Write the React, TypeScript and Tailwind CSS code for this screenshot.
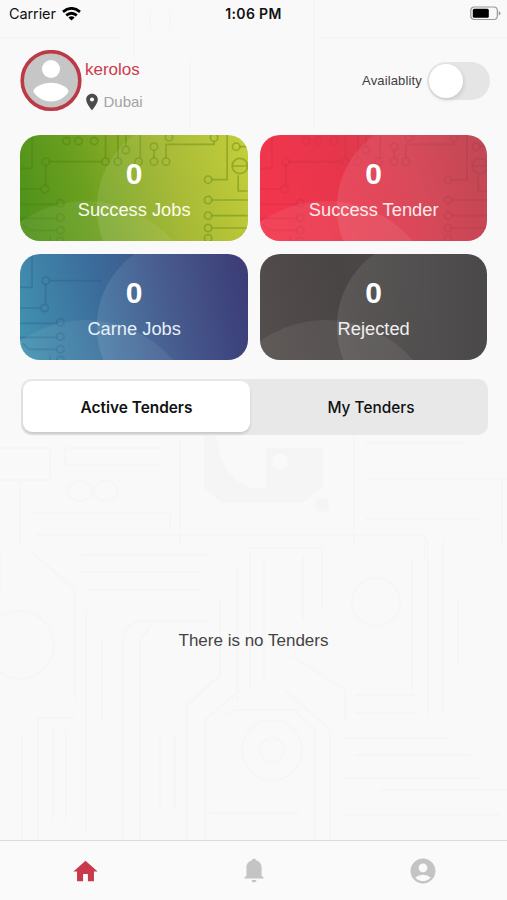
import { useState } from "react"
import { MdAccountCircle, MdHome, MdLocationOn } from "react-icons/md"

const stats = [
    { label: "Success Jobs", value: 0, bg: "bg-[linear-gradient(75deg,#51931b_5%,#6b9f1f_30%,#a3b72f_65%,#c5cf3c_100%)]", line: "text-[#4c8010]/40", midLine: "text-[#4c8010]/40", rightLine: "text-[#5f8510]/45", text: "text-[#fafcee]" },
    { label: "Success Tender", value: 0, bg: "bg-[linear-gradient(75deg,#f5354e_0%,#e6364b_40%,#d54354_68%,#c04955_100%)]", line: "text-[#a92d42]/20", midLine: "text-[#a92d42]/15", rightLine: "text-[#9c3044]/22", text: "text-[#ffe9ea]" },
    { label: "Carne Jobs", value: 0, bg: "bg-[linear-gradient(75deg,#4294b2_0%,#3b6c9b_38%,#3f5389_65%,#3c3b76_100%)]", line: "text-[#265d82]/35", midLine: "text-transparent", rightLine: "text-transparent", text: "text-[#e6f0fa]" },
    { label: "Rejected", value: 0, bg: "bg-[linear-gradient(75deg,#544e4d_0%,#494544_40%,#4b4949_70%,#4b4949_100%)]", line: "text-transparent", midLine: "text-transparent", rightLine: "text-transparent", text: "text-[#eeeeee]" },
]

const leftDots = [[109, 102], [106, 184], [153, 227], [153, 270], [153, 308], [153, 340]]
const midDots = [[171, 40], [207, 40], [254, 40], [288, 102], [325, 102]]
const rightDots = [[349, 67], [387, 102], [433, 57], [433, 102], [469, 102], [478, 29], [613, 30], [679, 57], [595, 156], [595, 217], [595, 264], [595, 301], [595, 332]]

function CardArt({ line, midLine, rightLine }: any) {
    return (
        <svg className="absolute inset-0 h-full w-full" viewBox="32 22 681 318" preserveAspectRatio="none" fill="none" stroke="currentColor" strokeWidth="5">
            <defs>
                <linearGradient id="shine" gradientUnits="userSpaceOnUse" x1="262" y1="0" x2="680" y2="0">
                    <stop offset="0" stopColor="#fff" stopOpacity="0.1" />
                    <stop offset="0.45" stopColor="#fff" stopOpacity="0.05" />
                    <stop offset="1" stopColor="#fff" stopOpacity="0" />
                </linearGradient>
            </defs>
            <g className={line}>
                {leftDots.map(([x, y]) => <circle key={x + "-" + y} cx={x} cy={y} r="11" />)}
                <path d="M120 102H277M109 113V173M32 184H95M68 22V122H32M32 230H142M32 272H142M60 308H142M60 308L40 290M122 340V325" />
            </g>
            <g className={midLine}>
                {midDots.map(([x, y]) => <circle key={x + "-" + y} cx={x} cy={y} r="11" />)}
                <path d="M288 22V91M325 22V91" />
            </g>
            <g className={rightLine}>
                {rightDots.map(([x, y]) => <circle key={x + "-" + y} cx={x} cy={y} r="11" />)}
                <circle cx="690" cy="115" r="23" />
                <path d="M349 22V56M392 22V91M433 68V91M469 91V50H613V41M606 156H652V22M606 217H713M606 264H713M606 301H713M685 143V190H713M669 115H711M690 57H713" />
            </g>
            <circle cx="529" cy="240" r="267" fill="url(#shine)" stroke="none" />
            <circle cx="230" cy="562" r="342" fill="white" fillOpacity="0.07" stroke="none" />
        </svg>
    )
}

function StatCard({ item }: any) {
    return (
        <div className={`relative h-[106px] overflow-hidden rounded-[20px] ${item.bg}`}>
            <CardArt line={item.line} midLine={item.midLine} rightLine={item.rightLine} />
            <div className="relative flex flex-col items-center pt-[21px]">
                <span className="text-[30px] font-bold leading-[36px] text-white">{item.value}</span>
                <span className={`mt-[6px] text-[18.3px] leading-[24px] ${item.text}`}>{item.label}</span>
            </div>
        </div>
    )
}

// faint circuit board behind the whole screen
function Backdrop() {
    return (
        <svg className="absolute inset-0 h-full w-full" viewBox="0 0 507 900" fill="none" stroke="#f6f6f6" strokeWidth="2">
            <path d="M134 0V60M0 38H120M314 0V128M322 38H507M190 60V128M150 10V30M170 10V30" />
            <path d="M0 448H50V480H0M65 448V465H160M65 448H160M20 480V545M32 513H170V530M180 440V545M354 434V545M365 443H465M370 479H507M365 519H480M36 535H425V560M502 480V545" />
            <path d="M82 555H210M82 572H200M90 590H200M30 550L75 590V700M0 555V590M250 690V548H322V610M237 570V700M264 560V680M303 556V620M428 540V715M443 540V715M412 560V690M458 600V665" />
            <path d="M123 840V640Q123 625 140 621H210M140 840V640L155 620M22 735V840M38 840V718H75M86 610V835M102 640V720M53 730V820M66 730V820M160 735V810M175 735V810M187 840V705L220 675V600M205 840V720L240 690" />
            <path d="M290 655L345 690V720M285 690L330 730V840M222 715L235 710H295L315 730V840M355 695H415M355 713H415M345 738H450M355 755H470M345 778H480M380 790H507M345 815H500M210 813H300" />
            <circle cx="20" cy="645" r="34" />
            <circle cx="376" cy="602" r="24" />
            <circle cx="272" cy="750" r="30" />
            <circle cx="272" cy="750" r="12" />
            <ellipse cx="80" cy="491" rx="12" ry="10" />
            <ellipse cx="106" cy="491" rx="12" ry="10" />
            <circle cx="322" cy="505" r="7" fill="#f5f5f5" />
            <path d="M204 430V488L222 503H303L323 487V448H266V488H250Q218 475 216 430Z" fill="#f5f5f5" stroke="none" />
            <circle cx="280" cy="462" r="8" fill="#f9f9f9" stroke="none" />
        </svg>
    )
}

function Bell() {
    return (
        <svg className="h-[25px] w-[20px] text-[#c4c4c4]" viewBox="0 0 20 25" fill="currentColor">
            <path d="M10 0.500C8.900 0.500 8.300 1.200 8.100 2.300C4.500 3.200 2.400 6 2.400 9.500V18L0.500 19.200V20.600H19.500V19.200L17.600 18V9.500C17.600 6 15.500 3.200 11.900 2.300C11.700 1.200 11.100 0.500 10 0.500Z" />
            <path d="M7.500 22H12.500C12.300 23.600 11.300 24.500 10 24.500C8.700 24.500 7.700 23.600 7.500 22Z" />
        </svg>
    )
}

export default function App() {
    const [tab, setTab] = useState("active")
    const [available, setAvailable] = useState(false)

    return (
        <div className="relative h-[900px] w-[507px] overflow-hidden bg-[#f9f9f9] font-['Liberation_Sans',Arial,sans-serif]">
            <Backdrop />
            <div className="relative flex h-full flex-col">
                <header className="grid h-[28px] grid-cols-3 items-center pl-[9px] pr-[6px] font-['Inter',sans-serif] text-[#111]">
                    <div className="flex items-center gap-[6px]">
                        <span className="text-[14.5px] tracking-[-0.1px]">Carrier</span>
                        <svg className="-mt-[1px] h-[14px] w-[19px]" viewBox="0 0 19 14" fill="none" stroke="#000" strokeWidth="2.8">
                            <path d="M1 4.800Q9.500 -2 18 4.800" />
                            <path d="M4.200 8.400Q9.500 4 14.800 8.400" />
                            <path d="M6.400 10.500Q9.500 8.200 12.600 10.500L9.500 13.600Z" fill="#000" stroke="none" />
                        </svg>
                    </div>
                    <span className="-ml-[3px] -mt-[1px] text-center text-[14px] font-semibold tracking-[0.35px]">1:06 PM</span>
                    <svg className="-mt-[1px] h-[15px] w-[31px] justify-self-end" viewBox="0 0 31 15" fill="none">
                        <rect x="0.800" y="1" width="26.500" height="12.500" rx="3.500" stroke="#999" strokeWidth="1.200" />
                        <rect x="2.800" y="2.800" width="16" height="8.900" rx="1.500" fill="#000" />
                        <path d="M28.700 5V9.500Q30.500 8.800 30.500 7.250Q30.500 5.700 28.700 5Z" fill="#999" />
                    </svg>
                </header>

                <section className="flex h-[107.4px] items-start pl-[20px] pr-[17px] pt-[22px]">
                    <svg className="h-[62px] w-[62px]" viewBox="0 0 62 62">
                        <circle cx="31" cy="30.500" r="28.800" fill="#c6c6c6" stroke="#bc3a47" strokeWidth="3.600" />
                        <circle cx="31" cy="19" r="9" fill="#fff" />
                        <path d="M31 51.500C23.500 51.500 17 47.500 13.300 41.800C13.400 36 25 32.700 31 32.700C37 32.700 48.500 36 48.600 41.800C45 47.500 38.500 51.500 31 51.500Z" fill="#fff" />
                    </svg>
                    <div className="flex flex-col pl-[3px] pt-[9px]">
                        <span className="text-[17px] leading-[22px] text-[#cb3c4c]">kerolos</span>
                        <div className="mt-[11px] flex items-center">
                            <MdLocationOn className="-ml-[3.5px] h-[20px] w-[20px] text-[#4b4b4b]" />
                            <span className="ml-[2px] text-[15px] leading-[20px] text-[#a3a3a3]">Dubai</span>
                        </div>
                    </div>
                    <div className="ml-auto flex items-center gap-[5px] pt-[11.5px]">
                        <span className="text-[13px] tracking-[0.15px] text-[#3f3f3f]">Availablity</span>
                        <button className="flex h-[38px] w-[63px] items-center rounded-full bg-[#e5e5e6] px-[2px]" onClick={() => setAvailable(!available)}>
                            <span className={`h-[34px] w-[34px] rounded-full bg-white shadow-[1px_2px_4px_rgba(0,0,0,0.12)] ${available ? "ml-auto" : ""}`}></span>
                        </button>
                    </div>
                </section>

                <section className="ml-[20.4px] grid w-[467px] grid-cols-2 gap-x-[12px] gap-y-[12.5px]">
                    {stats.map((item) => <StatCard key={item.label} item={item} />)}
                </section>

                <div className="ml-[20.5px] mt-[18.7px] flex h-[56px] w-[467.5px] items-center rounded-[10px] bg-[#e8e8e8] px-[2.5px] font-['Inter',sans-serif] text-[15.4px] text-[#111]">
                    <button className={`h-[51px] w-[227px] rounded-[9px] pt-[1px] font-semibold ${tab === "active" ? "bg-white shadow-[0_2px_3px_rgba(0,0,0,0.14)]" : ""}`} onClick={() => setTab("active")}>Active Tenders</button>
                    <button className={`ml-auto h-[51px] w-[229px] rounded-[9px] pt-[1px] font-medium ${tab === "my" ? "bg-white shadow-[0_2px_3px_rgba(0,0,0,0.14)]" : ""}`} onClick={() => setTab("my")}>My Tenders</button>
                </div>

                <main className="flex flex-1 items-center justify-center pt-[6px]">
                    <p className="text-[17px] text-[#444]">There is no Tenders</p>
                </main>

                <nav className="grid h-[60px] grid-cols-3 items-center justify-items-center border-t border-[#dcdcdc] bg-[#fafafa]">
                    <MdHome className="ml-[1px] mt-[2px] h-[29px] w-[29px] text-[#c83a4b]" />
                    <Bell />
                    <MdAccountCircle className="h-[30px] w-[30px] text-[#c4c4c4]" />
                </nav>
            </div>
        </div>
    )
}
